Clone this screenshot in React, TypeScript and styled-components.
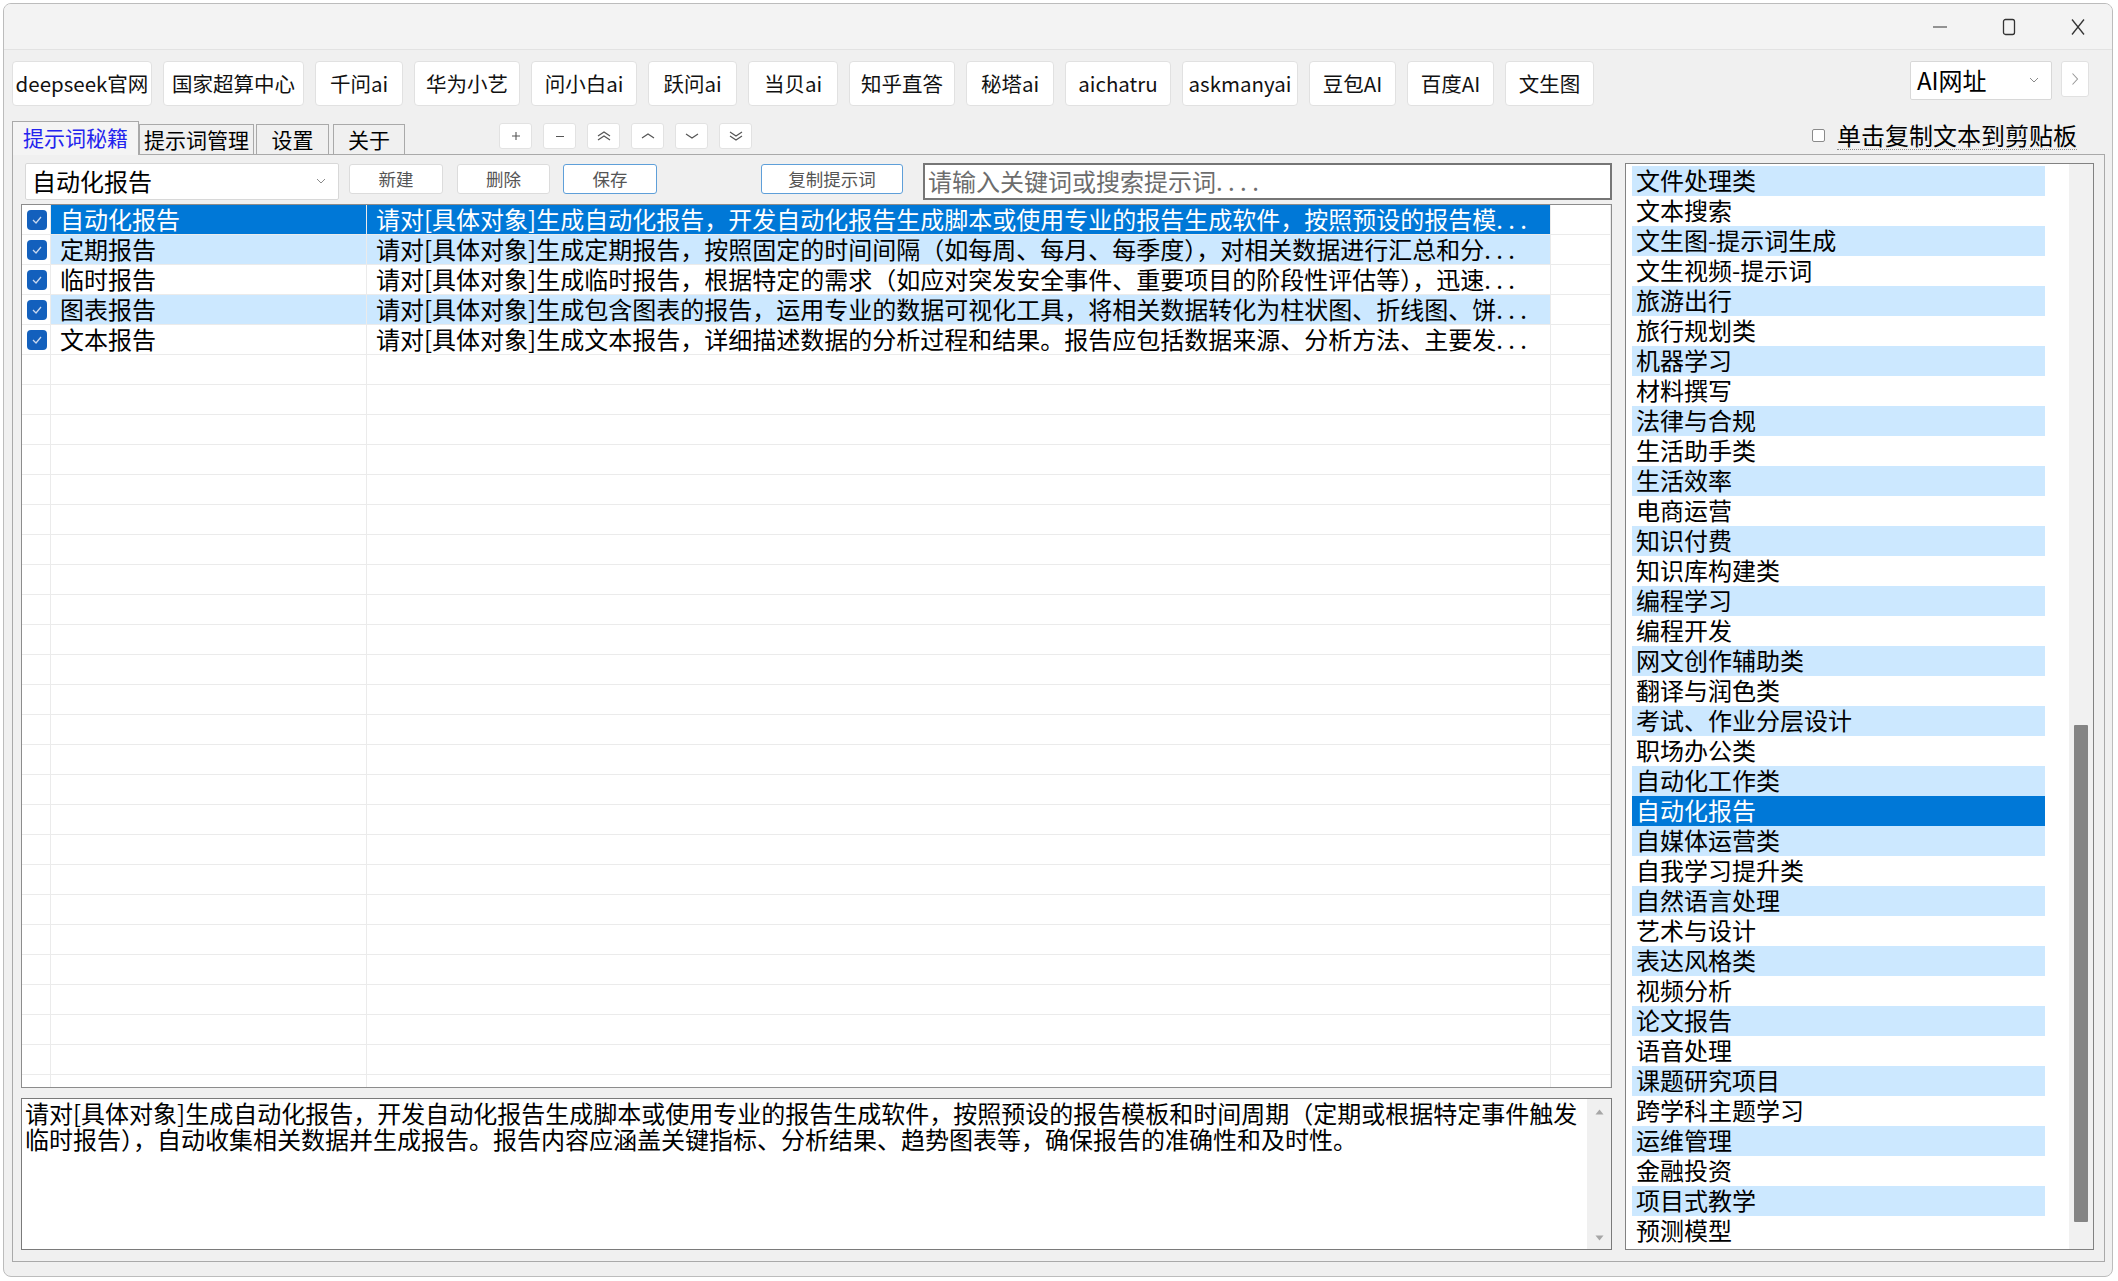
import React from "react";
import styled, { createGlobalStyle } from "styled-components";

const GlobalStyle = createGlobalStyle`
  html, body { margin: 0; padding: 0; background: #ffffff; }
  body { font-family: "Noto Sans CJK SC", "Noto Sans", sans-serif; color: #000; }
  * { box-sizing: border-box; }
`;

const FONT = `"Noto Sans CJK SC", "Noto Sans", sans-serif`;

const Page = styled.div`
  width: 2118px;
  height: 1281px;
  padding: 3px 5px 4px 3px;
  overflow: hidden;
`;

const Window = styled.div`
  height: 1274px;
  border: 1px solid #bcbcbc;
  border-radius: 8px;
  background: #f0f0f0;
  display: flex;
  flex-direction: column;
  overflow: hidden;
`;

const TitleBar = styled.div`
  height: 46px;
  flex: none;
  display: flex;
  justify-content: flex-end;
  align-items: center;
  border-bottom: 1px solid #e2e2e2;
  background: #f3f3f3;
`;

const WinCtl = styled.div`
  width: 69px;
  height: 45px;
  display: flex;
  align-items: center;
  justify-content: center;
  color: #222;
`;

const Body = styled.div`
  flex: 1;
  display: flex;
  flex-direction: column;
  padding: 0 7px 14px 8px;
`;

const ButtonRow = styled.div`
  margin-top: 11px;
  height: 45px;
  display: flex;
  align-items: flex-start;
  gap: 11px;
`;

const LinkButton = styled.div<{ $w: number }>`
  width: ${(p) => p.$w}px;
  height: 45px;
  flex: none;
  background: #ffffff;
  border: 1px solid #e1e1e1;
  border-radius: 4px;
  display: flex;
  align-items: center;
  justify-content: center;
  font-size: 20.5px;
  line-height: 1;
  white-space: nowrap;
  color: #111;
`;

const RightGroup = styled.div`
  margin-left: auto;
  padding-right: 16px;
  display: flex;
  align-items: flex-start;
  gap: 9px;
`;

const Combo = styled.div<{ $w: number; $h: number }>`
  width: ${(p) => p.$w}px;
  height: ${(p) => p.$h}px;
  flex: none;
  background: #ffffff;
  border: 1px solid #d8d8d8;
  border-radius: 2px;
  display: flex;
  align-items: center;
  padding: 0 12px 2px 6px;
  font-size: 24px;
  line-height: 1;
  color: #000;
  white-space: nowrap;
`;

const ComboText = styled.span`
  flex: 1;
`;

const NextButton = styled.div`
  width: 28px;
  height: 36px;
  background: #ffffff;
  border: 1px solid #e1e1e1;
  border-radius: 3px;
  display: flex;
  align-items: center;
  justify-content: center;
`;

const TabRow = styled.div`
  margin-top: 15px;
  height: 33px;
  flex: none;
  display: flex;
  align-items: flex-end;
`;

const Tab = styled.div<{ $active?: boolean; $w: number; $ml?: number }>`
  position: relative;
  z-index: ${(p) => (p.$active ? 1 : 0)};
  width: ${(p) => p.$w}px;
  height: ${(p) => (p.$active ? 34 : 30)}px;
  margin-left: ${(p) => p.$ml ?? 0}px;
  margin-bottom: ${(p) => (p.$active ? -1 : 0)}px;
  flex: none;
  border: 1px solid #a9a9a9;
  border-bottom: none;
  background: ${(p) => (p.$active ? "#f4f4f4" : "#f0f0f0")};
  display: flex;
  align-items: center;
  justify-content: center;
  font-size: 21px;
  line-height: 1;
  color: ${(p) => (p.$active ? "#2323ee" : "#000")};
  padding-bottom: ${(p) => (p.$active ? 2 : 0)}px;
`;

const NavGroup = styled.div`
  margin-left: 94px;
  align-self: flex-start;
  margin-top: 2px;
  display: flex;
  gap: 11px;
`;

const NavButton = styled.div`
  width: 33px;
  height: 26px;
  background: #ffffff;
  border: 1px solid #e2e2e2;
  border-radius: 3px;
  display: flex;
  align-items: center;
  justify-content: center;
  color: #555;
`;

const CopyToggle = styled.label`
  margin-left: auto;
  margin-right: 28px;
  align-self: flex-start;
  margin-top: 0px;
  display: flex;
  align-items: center;
  font-size: 24px;
  line-height: 30px;
  color: #000;
`;

const SmallBox = styled.span`
  width: 13px;
  height: 13px;
  border: 1px solid #8a8a8a;
  border-radius: 2px;
  background: #fff;
  margin-right: 12px;
`;

const FocusText = styled.span`
  border-bottom: 1px dotted #8a8a8a;
  line-height: 28px;
`;

const Panel = styled.div`
  height: 1108px;
  flex: none;
  border: 1px solid #a9a9a9;
  padding: 8px 10px 11px 8px;
  display: grid;
  grid-template-columns: 1591px 469px;
  column-gap: 13px;
`;

const LeftCol = styled.div`
  display: flex;
  flex-direction: column;
  min-width: 0;
`;

const Toolbar = styled.div`
  height: 37px;
  flex: none;
  display: flex;
  align-items: flex-start;
  padding-left: 4px;
`;

const ActionButton = styled.div<{ $w: number; $ml: number; $focus?: boolean }>`
  width: ${(p) => p.$w}px;
  height: 30px;
  margin-left: ${(p) => p.$ml}px;
  margin-top: 1px;
  flex: none;
  background: #ffffff;
  border: 1px solid ${(p) => (p.$focus ? "#5e9fd9" : "#dcdcdc")};
  border-radius: 3px;
  display: flex;
  align-items: center;
  justify-content: center;
  font-size: 17.5px;
  line-height: 1;
  color: #555;
`;

const SearchInput = styled.input`
  width: 689px;
  height: 37px;
  margin-left: 20px;
  flex: none;
  border: 2px solid #767676;
  background: #ffffff;
  padding: 0 0 3px 3px;
  font-family: ${FONT};
  font-size: 24px;
  color: #000;
  outline: none;
  &::placeholder {
    color: #6d6d6d;
  }
`;

const Table = styled.div`
  margin-top: 4px;
  height: 884px;
  flex: none;
  border: 1px solid #8c8c8c;
  background: #ffffff;
  overflow: hidden;
`;

const Row = styled.div`
  display: grid;
  grid-template-columns: 29px 316px 1184px 1fr;
  height: 30px;
`;

const Cell = styled.div<{ $state?: "sel" | "alt" | "none" }>`
  height: 30px;
  border-right: 1px solid #ebebeb;
  border-bottom: 1px solid #ebebeb;
  background: ${(p) =>
    p.$state === "sel" ? "#0078d7" : p.$state === "alt" ? "#cce8ff" : "#ffffff"};
  color: ${(p) => (p.$state === "sel" ? "#ffffff" : "#000")};
  font-size: 24px;
  line-height: 27px;
  padding-left: 9px;
  white-space: nowrap;
`;

const CheckCell = styled.div`
  height: 30px;
  border-right: 1px solid #ebebeb;
  border-bottom: 1px solid #ebebeb;
  display: flex;
  align-items: center;
  justify-content: center;
  padding-left: 2px;
`;

const CheckBox = styled.span`
  width: 20px;
  height: 20px;
  border-radius: 4px;
  background: #1360bd;
  display: flex;
  align-items: center;
  justify-content: center;
`;

const TextArea = styled.div`
  margin-top: 10px;
  height: 152px;
  flex: none;
  border: 1px solid #7a7a7a;
  background: #ffffff;
  display: flex;
`;

const TextBody = styled.div`
  flex: 1;
  padding: 1px 0 0 3px;
  font-size: 24px;
  line-height: 26px;
  color: #000;
`;

const TextScroll = styled.div`
  width: 24px;
  flex: none;
  background: #f0f0f0;
  display: flex;
  flex-direction: column;
  justify-content: space-between;
  align-items: center;
  padding: 10px 0 8px;
`;

const ListBox = styled.div`
  border: 1px solid #828282;
  background: #ffffff;
  display: flex;
  overflow: hidden;
`;

const ListItems = styled.div`
  width: 413px;
  margin-left: 6px;
  padding-top: 2px;
  flex: none;
`;

const ListItem = styled.div<{ $state: "sel" | "alt" | "none" }>`
  height: 30px;
  padding-left: 4px;
  font-size: 24px;
  line-height: 27px;
  white-space: nowrap;
  background: ${(p) =>
    p.$state === "sel" ? "#0078d7" : p.$state === "alt" ? "#cce8ff" : "transparent"};
  color: ${(p) => (p.$state === "sel" ? "#ffffff" : "#000")};
`;

const ScrollTrack = styled.div`
  margin-left: auto;
  width: 24px;
  flex: none;
  background: #f1f1f1;
  padding: 0 5px;
`;

const ScrollThumb = styled.div`
  margin-top: 561px;
  height: 497px;
  background: #858585;
  border-radius: 1px;
`;

const topButtons: [string, number][] = [
  ["deepseek官网", 140],
  ["国家超算中心", 141],
  ["千问ai", 88],
  ["华为小艺", 106],
  ["问小白ai", 106],
  ["跃问ai", 89],
  ["当贝ai", 90],
  ["知乎直答", 106],
  ["秘塔ai", 88],
  ["aichatru", 106],
  ["askmanyai", 116],
  ["豆包AI", 87],
  ["百度AI", 87],
  ["文生图", 89],
];

const rows: [string, string][] = [
  ["自动化报告", "请对[具体对象]生成自动化报告，开发自动化报告生成脚本或使用专业的报告生成软件，按照预设的报告模. . ."],
  ["定期报告", "请对[具体对象]生成定期报告，按照固定的时间间隔（如每周、每月、每季度），对相关数据进行汇总和分. . ."],
  ["临时报告", "请对[具体对象]生成临时报告，根据特定的需求（如应对突发安全事件、重要项目的阶段性评估等），迅速. . ."],
  ["图表报告", "请对[具体对象]生成包含图表的报告，运用专业的数据可视化工具，将相关数据转化为柱状图、折线图、饼. . ."],
  ["文本报告", "请对[具体对象]生成文本报告，详细描述数据的分析过程和结果。报告应包括数据来源、分析方法、主要发. . ."],
];

const categories = [
  "文件处理类", "文本搜索", "文生图-提示词生成", "文生视频-提示词", "旅游出行", "旅行规划类",
  "机器学习", "材料撰写", "法律与合规", "生活助手类", "生活效率", "电商运营", "知识付费",
  "知识库构建类", "编程学习", "编程开发", "网文创作辅助类", "翻译与润色类", "考试、作业分层设计",
  "职场办公类", "自动化工作类", "自动化报告", "自媒体运营类", "自我学习提升类", "自然语言处理",
  "艺术与设计", "表达风格类", "视频分析", "论文报告", "语音处理", "课题研究项目", "跨学科主题学习",
  "运维管理", "金融投资", "项目式教学", "预测模型",
];

const ChevronDown = () => (
  <svg width="10" height="6" viewBox="0 0 10 6">
    <polyline points="1,1 5,5 9,1" fill="none" stroke="#8a8a8a" strokeWidth="1" />
  </svg>
);

const Chev = ({ up, double }: { up: boolean; double?: boolean }) => (
  <svg width="16" height="12" viewBox="0 0 16 12">
    {double ? (
      up ? (
        <>
          <polyline points="2,6 8,2 14,6" fill="none" stroke="#555" strokeWidth="1.2" />
          <polyline points="2,10 8,6 14,10" fill="none" stroke="#555" strokeWidth="1.2" />
        </>
      ) : (
        <>
          <polyline points="2,2 8,6 14,2" fill="none" stroke="#555" strokeWidth="1.2" />
          <polyline points="2,6 8,10 14,6" fill="none" stroke="#555" strokeWidth="1.2" />
        </>
      )
    ) : up ? (
      <polyline points="2,8 8,4 14,8" fill="none" stroke="#555" strokeWidth="1.2" />
    ) : (
      <polyline points="2,4 8,8 14,4" fill="none" stroke="#555" strokeWidth="1.2" />
    )}
  </svg>
);

const Check = () => (
  <svg width="12" height="10" viewBox="0 0 12 10">
    <polyline points="2,5 5,8 10,2" fill="none" stroke="#c9d8ee" strokeWidth="1.3" />
  </svg>
);

export default function App() {
  const emptyRows = Array.from({ length: 26 });
  return (
    <Page>
      <GlobalStyle />
      <Window>
        <TitleBar>
          <WinCtl>
            <svg width="16" height="4" viewBox="0 0 16 4">
              <line x1="1" y1="2" x2="15" y2="2" stroke="#333" strokeWidth="1.2" />
            </svg>
          </WinCtl>
          <WinCtl>
            <svg width="14" height="18" viewBox="0 0 14 18">
              <rect x="1.5" y="1.5" width="11" height="15" rx="2" fill="none" stroke="#333" strokeWidth="1.3" />
            </svg>
          </WinCtl>
          <WinCtl>
            <svg width="16" height="18" viewBox="0 0 16 18">
              <line x1="2" y1="1.5" x2="14" y2="16.5" stroke="#333" strokeWidth="1.3" />
              <line x1="14" y1="1.5" x2="2" y2="16.5" stroke="#333" strokeWidth="1.3" />
            </svg>
          </WinCtl>
        </TitleBar>
        <Body>
          <ButtonRow>
            {topButtons.map(([t, w]) => (
              <LinkButton key={t} $w={w}>
                {t}
              </LinkButton>
            ))}
            <RightGroup>
              <Combo $w={142} $h={39}>
                <ComboText>AI网址</ComboText>
                <ChevronDown />
              </Combo>
              <NextButton>
                <svg width="8" height="14" viewBox="0 0 8 14">
                  <polyline points="1.5,1.5 6.5,7 1.5,12.5" fill="none" stroke="#9a9a9a" strokeWidth="1.1" />
                </svg>
              </NextButton>
            </RightGroup>
          </ButtonRow>
          <TabRow>
            <Tab $active $w={127}>提示词秘籍</Tab>
            <Tab $w={115}>提示词管理</Tab>
            <Tab $w={73} $ml={2}>设置</Tab>
            <Tab $w={72} $ml={4}>关于</Tab>
            <NavGroup>
              <NavButton>
                <svg width="12" height="12" viewBox="0 0 12 12">
                  <line x1="6" y1="2" x2="6" y2="10" stroke="#555" strokeWidth="1.1" />
                  <line x1="2" y1="6" x2="10" y2="6" stroke="#555" strokeWidth="1.1" />
                </svg>
              </NavButton>
              <NavButton>
                <svg width="12" height="12" viewBox="0 0 12 12">
                  <line x1="2" y1="6.5" x2="10" y2="6.5" stroke="#555" strokeWidth="1.1" />
                </svg>
              </NavButton>
              <NavButton>
                <Chev up double />
              </NavButton>
              <NavButton>
                <Chev up />
              </NavButton>
              <NavButton>
                <Chev up={false} />
              </NavButton>
              <NavButton>
                <Chev up={false} double />
              </NavButton>
            </NavGroup>
            <CopyToggle>
              <SmallBox />
              <FocusText>单击复制文本到剪贴板</FocusText>
            </CopyToggle>
          </TabRow>
          <Panel>
            <LeftCol>
              <Toolbar>
                <Combo $w={314} $h={37}>
                  <ComboText>自动化报告</ComboText>
                  <ChevronDown />
                </Combo>
                <ActionButton $w={94} $ml={10}>新建</ActionButton>
                <ActionButton $w={93} $ml={14}>删除</ActionButton>
                <ActionButton $w={94} $ml={13} $focus>保存</ActionButton>
                <ActionButton $w={142} $ml={104} $focus>复制提示词</ActionButton>
                <SearchInput placeholder="请输入关键词或搜索提示词. . . ." readOnly />
              </Toolbar>
              <Table>
                {rows.map(([name, text], i) => {
                  const st = i === 0 ? "sel" : i % 2 === 1 ? "alt" : "none";
                  return (
                    <Row key={name}>
                      <CheckCell>
                        <CheckBox>
                          <Check />
                        </CheckBox>
                      </CheckCell>
                      <Cell $state={st}>{name}</Cell>
                      <Cell $state={st}>{text}</Cell>
                      <Cell />
                    </Row>
                  );
                })}
                {emptyRows.map((_, i) => (
                  <Row key={"e" + i}>
                    <CheckCell />
                    <Cell />
                    <Cell />
                    <Cell />
                  </Row>
                ))}
              </Table>
              <TextArea>
                <TextBody>
                  请对[具体对象]生成自动化报告，开发自动化报告生成脚本或使用专业的报告生成软件，按照预设的报告模板和时间周期（定期或根据特定事件触发临时报告），自动收集相关数据并生成报告。报告内容应涵盖关键指标、分析结果、趋势图表等，确保报告的准确性和及时性。
                </TextBody>
                <TextScroll>
                  <svg width="9" height="6" viewBox="0 0 9 6">
                    <polygon points="0.5,5.5 4.5,0.5 8.5,5.5" fill="#a6a6a6" />
                  </svg>
                  <svg width="9" height="6" viewBox="0 0 9 6">
                    <polygon points="0.5,0.5 4.5,5.5 8.5,0.5" fill="#a6a6a6" />
                  </svg>
                </TextScroll>
              </TextArea>
            </LeftCol>
            <ListBox>
              <ListItems>
                {categories.map((c, i) => (
                  <ListItem key={c} $state={c === "自动化报告" ? "sel" : i % 2 === 0 ? "alt" : "none"}>
                    {c}
                  </ListItem>
                ))}
              </ListItems>
              <ScrollTrack>
                <ScrollThumb />
              </ScrollTrack>
            </ListBox>
          </Panel>
        </Body>
      </Window>
    </Page>
  );
}
